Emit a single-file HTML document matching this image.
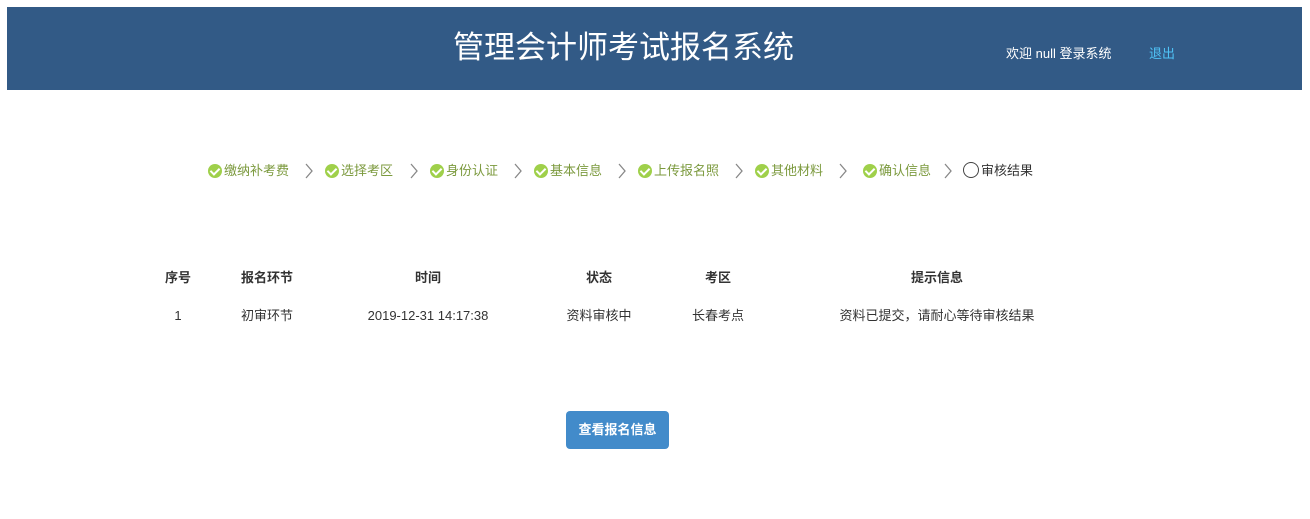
<!DOCTYPE html>
<html><head><meta charset="utf-8"><style>
body{margin:0;width:1310px;height:519px;background:#fff;font-family:"Liberation Sans","Noto Sans CJK SC",sans-serif;position:relative;overflow:hidden}
div{line-height:16px}
.hd{position:absolute;left:7px;top:7px;width:1295px;height:83px;background:#325a86}
.t{position:absolute;left:453px;top:30px;font-size:31px;line-height:36px;color:#fff}
.w{position:absolute;left:1006px;top:46px;font-size:13px;color:#fff}
.q{position:absolute;left:1149px;top:46px;font-size:13px;color:#4fc3f7}
.s{position:absolute;top:162px;font-size:13px;color:#7c9a3e;white-space:nowrap;line-height:18px}
.ic{display:inline-block;width:14px;height:14px;border-radius:50%;background:#9fd04a;vertical-align:-3px;margin-right:2px;position:relative}
.ic:after{content:"";position:absolute;left:4px;top:2px;width:4px;height:7px;border:solid #fff;border-width:0 2px 2px 0;transform:rotate(45deg)}
.ar{position:absolute;top:163px}
.c{position:absolute;font-size:13px;color:#333;transform:translateX(-50%);white-space:nowrap}
.b{font-weight:bold}
.btn{position:absolute;left:566px;top:411px;width:103px;height:38px;background:#428bca;border-radius:4px;color:#fff;font-size:13px;font-weight:bold;text-align:center;line-height:38px}
</style></head><body>
<div class="hd"></div>
<div class="t">管理会计师考试报名系统</div>
<div class="w">欢迎 null 登录系统</div>
<div class="q">退出</div>
<div class="s" style="left:208px"><span class="ic"></span>缴纳补考费</div>
<div class="s" style="left:325px"><span class="ic"></span>选择考区</div>
<div class="s" style="left:430px"><span class="ic"></span>身份认证</div>
<div class="s" style="left:534px"><span class="ic"></span>基本信息</div>
<div class="s" style="left:638px"><span class="ic"></span>上传报名照</div>
<div class="s" style="left:755px"><span class="ic"></span>其他材料</div>
<div class="s" style="left:863px"><span class="ic"></span>确认信息</div>
<div class="s" style="left:963px;color:#333"><span class="ic" style="background:#fff;border:1.5px solid #444;box-sizing:border-box;width:16px;height:16px"></span>审核结果</div>
<svg class="ar" style="left:304px" width="10" height="16"><path d="M2 1L8 8L2 15" fill="none" stroke="#888" stroke-width="1.3"/></svg>
<svg class="ar" style="left:409px" width="10" height="16"><path d="M2 1L8 8L2 15" fill="none" stroke="#888" stroke-width="1.3"/></svg>
<svg class="ar" style="left:513px" width="10" height="16"><path d="M2 1L8 8L2 15" fill="none" stroke="#888" stroke-width="1.3"/></svg>
<svg class="ar" style="left:617px" width="10" height="16"><path d="M2 1L8 8L2 15" fill="none" stroke="#888" stroke-width="1.3"/></svg>
<svg class="ar" style="left:734px" width="10" height="16"><path d="M2 1L8 8L2 15" fill="none" stroke="#888" stroke-width="1.3"/></svg>
<svg class="ar" style="left:838px" width="10" height="16"><path d="M2 1L8 8L2 15" fill="none" stroke="#888" stroke-width="1.3"/></svg>
<svg class="ar" style="left:943px" width="10" height="16"><path d="M2 1L8 8L2 15" fill="none" stroke="#888" stroke-width="1.3"/></svg>
<div class="c b" style="left:178px;top:270px">序号</div>
<div class="c b" style="left:267px;top:270px">报名环节</div>
<div class="c b" style="left:428px;top:270px">时间</div>
<div class="c b" style="left:599px;top:270px">状态</div>
<div class="c b" style="left:718px;top:270px">考区</div>
<div class="c b" style="left:937px;top:270px">提示信息</div>
<div class="c" style="left:178px;top:308px">1</div>
<div class="c" style="left:267px;top:308px">初审环节</div>
<div class="c" style="left:428px;top:308px">2019-12-31 14:17:38</div>
<div class="c" style="left:599px;top:308px">资料审核中</div>
<div class="c" style="left:718px;top:308px">长春考点</div>
<div class="c" style="left:937px;top:308px">资料已提交，请耐心等待审核结果</div>
<div class="btn">查看报名信息</div>
</body></html>
